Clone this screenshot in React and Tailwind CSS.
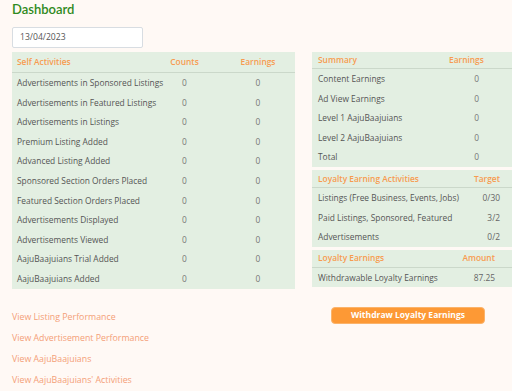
import React from 'react'

const selfRows = [
  'Advertisements in Sponsored Listings',
  'Advertisements in Featured Listings',
  'Advertisements in Listings',
  'Premium Listing Added',
  'Advanced Listing Added',
  'Sponsored Section Orders Placed',
  'Featured Section Orders Placed',
  'Advertisements Displayed',
  'Advertisements Viewed',
  'AajuBaajuians Trial Added',
  'AajuBaajuians Added',
]

const summaryRows = [
  ['Content Earnings', '0'],
  ['Ad View Earnings', '0'],
  ['Level 1 AajuBaajuians', '0'],
  ['Level 2 AajuBaajuians', '0'],
  ['Total', '0'],
]

const loyaltyRows = [
  ['Listings (Free Business, Events, Jobs)', '0/30'],
  ['Paid Listings, Sponsored, Featured', '3/2'],
  ['Advertisements', '0/2'],
]

const links = [
  'View Listing Performance',
  'View Advertisement Performance',
  'View AajuBaajuians',
  "View AajuBaajuians' Activities",
]

export default function App() {
  return (
    <div className="min-h-[391px] w-[512px] overflow-hidden bg-[#fff9f5] pl-3 font-['Open_Sans','Noto_Sans',sans-serif] text-[8.4px] text-[#555]">
      {/* Title */}
      <h1 className="pt-[1px] font-['Lato',sans-serif] text-[13px] font-semibold leading-[16px] text-[#2f8a22]">Dashboard</h1>

      {/* Date */}
      <div className="mt-[10px] flex h-[21px] w-[131px] items-center rounded-[2px] border border-[#d8dde2] bg-white pl-[7px] text-[8.6px] text-[#555]">
        13/04/2023
      </div>

      <div className="mt-[4px] flex">
        {/* Self activities */}
        <div className="w-[283px] bg-[#e3efe2]">
          <div className="grid h-[21px] grid-cols-[136px_73px_74px] items-center border-b border-[#cbd8ca] pt-[1px] font-semibold text-[#f79b50]">
            <div className="pl-[5px]">Self Activities</div>
            <div className="text-center">Counts</div>
            <div className="text-center">Earnings</div>
          </div>
          {selfRows.map((label) => (
            <div key={label} className="grid h-[19.6px] grid-cols-[136px_73px_74px] items-center pt-[1px]">
              <div className="whitespace-nowrap pl-[5px]">{label}</div>
              <div className="text-center text-[#777]">0</div>
              <div className="text-center text-[#777]">0</div>
            </div>
          ))}
        </div>

        {/* Right panel */}
        <div className="ml-[17px] flex w-[200px] flex-col gap-[3px]">
          <div className="bg-[#e3efe2]">
            <div className="flex h-[17px] items-center border-b border-[#cbd8ca] pl-[6px] pt-[1px] font-semibold text-[#f79b50]">
              <div className="flex-1">Summary</div>
              <div className="w-[63px]">Earnings</div>
            </div>
            {summaryRows.map(([label, value]) => (
              <div key={label} className="flex h-[19.6px] items-center pl-[6px] pt-[1px]">
                <div className="flex-1">{label}</div>
                <div className="pr-[33px] text-right text-[#777]">{value}</div>
              </div>
            ))}
          </div>

          <div className="bg-[#e3efe2]">
            <div className="flex h-[18px] items-center border-b border-[#cbd8ca] pl-[6px] pr-[12px] pt-[1px] font-semibold text-[#f79b50]">
              <div className="flex-1">Loyalty Earning Activities</div>
              <div>Target</div>
            </div>
            {loyaltyRows.map(([label, value]) => (
              <div key={label} className="flex h-[19.6px] items-center pl-[6px] pr-[12px] pt-[1px]">
                <div className="flex-1 whitespace-nowrap">{label}</div>
                <div className="text-right text-[#666]">{value}</div>
              </div>
            ))}
          </div>

          <div className="bg-[#e3efe2]">
            <div className="flex h-[18px] items-center border-b border-[#cbd8ca] pl-[6px] pr-[17px] pt-[1px] font-semibold text-[#f79b50]">
              <div className="flex-1">Loyalty Earnings</div>
              <div>Amount</div>
            </div>
            <div className="flex h-[19.6px] items-center pl-[6px] pr-[17px] pt-[1px]">
              <div className="flex-1">Withdrawable Loyalty Earnings</div>
              <div className="text-right text-[#666]">87.25</div>
            </div>
          </div>
        </div>
      </div>

      {/* Bottom */}
      <div className="mt-[18px] flex">
        <div className="flex w-[300px] flex-col gap-[8px] pt-[4px]">
          {links.map((l) => (
            <a key={l} className="text-[8.8px] leading-[13px] text-[#f4a078]">{l}</a>
          ))}
        </div>
        <div className="ml-[19px]">
          <button className="h-[17px] w-[154px] rounded-[4px] border border-[#fbb36a] bg-[#fd9935] text-[8.5px] font-bold text-white">
            Withdraw Loyalty Earnings
          </button>
        </div>
      </div>
    </div>
  )
}
